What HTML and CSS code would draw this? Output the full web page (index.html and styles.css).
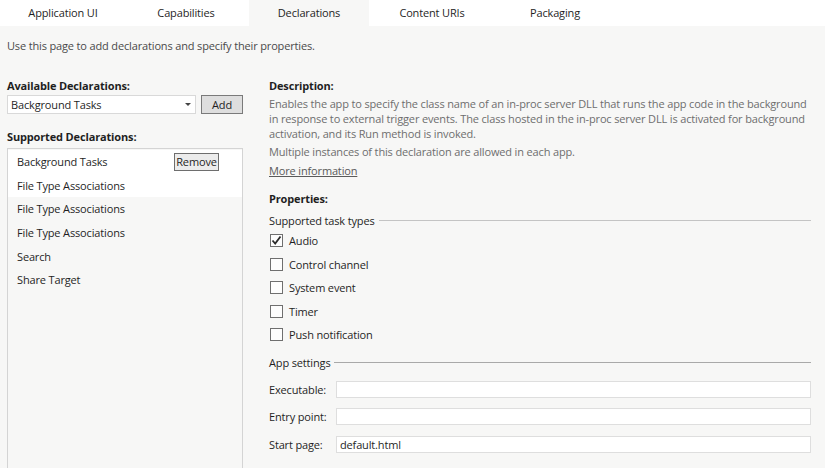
FILE: index.html
```html
<!DOCTYPE html>
<html>
<head>
<meta charset="utf-8">
<link rel="stylesheet" href="styles.css">
</head>
<body>
<div class="tabs">
  <div class="tab">Application UI</div>
  <div class="tab">Capabilities</div>
  <div class="tab active">Declarations</div>
  <div class="tab">Content URIs</div>
  <div class="tab">Packaging</div>
</div>
<p class="intro">Use this page to add declarations and specify their properties.</p>
<div class="main">
  <div class="left">
    <div class="heading">Available Declarations:</div>
    <div class="add-row">
      <div class="select"><span>Background Tasks</span><span class="arrow"></span></div>
      <div class="btn add">Add</div>
    </div>
    <div class="heading sup">Supported Declarations:</div>
    <div class="list">
      <div class="item hl"><span>Background Tasks</span><span class="btn remove">Remove</span></div>
      <div class="item hl"><span>File Type Associations</span></div>
      <div class="item"><span>File Type Associations</span></div>
      <div class="item"><span>File Type Associations</span></div>
      <div class="item"><span>Search</span></div>
      <div class="item"><span>Share Target</span></div>
    </div>
  </div>
  <div class="right">
    <div class="heading">Description:</div>
    <p class="desc">Enables the app to specify the class name of an in-proc server DLL that runs the app code in the background in response to external trigger events. The class hosted in the in-proc server DLL is activated for background activation, and its Run method is invoked.</p>
    <p class="desc multi">Multiple instances of this declaration are allowed in each app.</p>
    <a class="more">More information</a>
    <div class="heading props">Properties:</div>
    <div class="group"><span>Supported task types</span><span class="rule dotted"></span></div>
    <div class="checks">
      <div class="check"><span class="box checked"><svg width="11" height="11" viewBox="0 0 11 11"><path d="M1.5 5.5 L4.2 8.5 L9.5 1.5" fill="none" stroke="#2a2a2a" stroke-width="1.8"/></svg></span>Audio</div>
      <div class="check"><span class="box"></span>Control channel</div>
      <div class="check"><span class="box"></span>System event</div>
      <div class="check"><span class="box"></span>Timer</div>
      <div class="check"><span class="box"></span>Push notification</div>
    </div>
    <div class="group app"><span>App settings</span><span class="rule solid"></span></div>
    <div class="fields">
      <div class="field"><span class="label">Executable:</span><span class="input"></span></div>
      <div class="field"><span class="label">Entry point:</span><span class="input"></span></div>
      <div class="field"><span class="label">Start page:</span><span class="input">default.html</span></div>
    </div>
  </div>
</div>
</body>
</html>
```
FILE: styles.css
```css
html, body {
  margin: 0;
  padding: 0;
  height: 100%;
  overflow: hidden;
}
body {
  background: #f7f7f6;
  font-family: "Open Sans", "Noto Sans", sans-serif;
  font-size: 11px;
  letter-spacing: -0.15px;
  color: #1f1f1f;
}
.tabs {
  display: flex;
  gap: 3px;
  padding-left: 3px;
  height: 26px;
  background: #ffffff;
}
.tab {
  width: 120px;
  text-align: center;
  line-height: 26px;
}
.tab.active {
  background: #f7f7f6;
}
.intro {
  margin: 12px 0 0 7px;
  line-height: 15px;
  color: #4a4a4a;
}
.main {
  display: grid;
  grid-template-columns: 236px 1fr;
  column-gap: 26px;
  padding-left: 7px;
  padding-right: 14px;
  margin-top: 25px;
}
.heading {
  font-weight: 700;
  line-height: 15px;
}
.add-row {
  display: flex;
  gap: 5px;
  margin-top: 2px;
}
.select {
  background: #fff;
  border: 1px solid #d9d9d9;
  display: flex;
  justify-content: space-between;
  align-items: center;
  padding-left: 3px;
  padding-right: 4px;
  box-sizing: border-box;
  width: 189px;
  height: 19px;
}
.arrow {
  width: 0;
  height: 0;
  border-left: 3px solid transparent;
  border-right: 3px solid transparent;
  border-top: 3px solid #444;
}
.btn {
  border: 1px solid #7a7a7a;
  background: #dedede;
  line-height: 17px;
  text-align: center;
}
.add {
  width: 40px;
  height: 17px;
}
.sup {
  margin-top: 15px;
}
.list {
  margin-top: 4px;
  border: 1px solid #d4d4d4;
  height: 318px;
  padding-top: 1px;
}
.item {
  height: 23.6px;
  display: flex;
  align-items: center;
  justify-content: space-between;
  padding-left: 9px;
  padding-right: 23px;
}
.item.hl {
  background: #ffffff;
}
.remove {
  width: 43px;
  line-height: 16px;
  background: #ececec;
  border-color: #6e6e6e;
}
.desc {
  margin: 3px 0 0 0;
  line-height: 15px;
  color: #6e6e6e;
}
.desc.multi {
  margin-top: 3px;
}
.more {
  display: inline-block;
  margin-top: 4px;
  line-height: 15px;
  color: #5a5a5a;
  text-decoration: underline;
}
.props {
  margin-top: 13px;
}
.group {
  display: flex;
  align-items: center;
  gap: 4px;
  margin-top: 7px;
  line-height: 15px;
}
.rule {
  flex: 1;
  height: 0;
}
.rule.dotted {
  border-top: 1px solid #c4c4c4;
}
.rule.solid {
  border-top: 1px solid #a9a9a9;
}
.checks {
  margin-top: 1px;
}
.check {
  display: flex;
  align-items: center;
  height: 23.5px;
}
.box {
  width: 11px;
  height: 11px;
  border: 1px solid #6f6f6f;
  background: #fdfdfd;
  margin-left: 1px;
  margin-right: 6px;
  display: flex;
  align-items: center;
  justify-content: center;
}
.app {
  margin-top: 8px;
}
.fields {
  margin-top: 6px;
}
.field {
  display: flex;
  align-items: center;
  height: 27.5px;
}
.label {
  width: 67px;
}
.input {
  flex: 1;
  height: 15px;
  border: 1px solid #dedede;
  background: #fff;
  line-height: 15px;
  padding-left: 3px;
}
```
